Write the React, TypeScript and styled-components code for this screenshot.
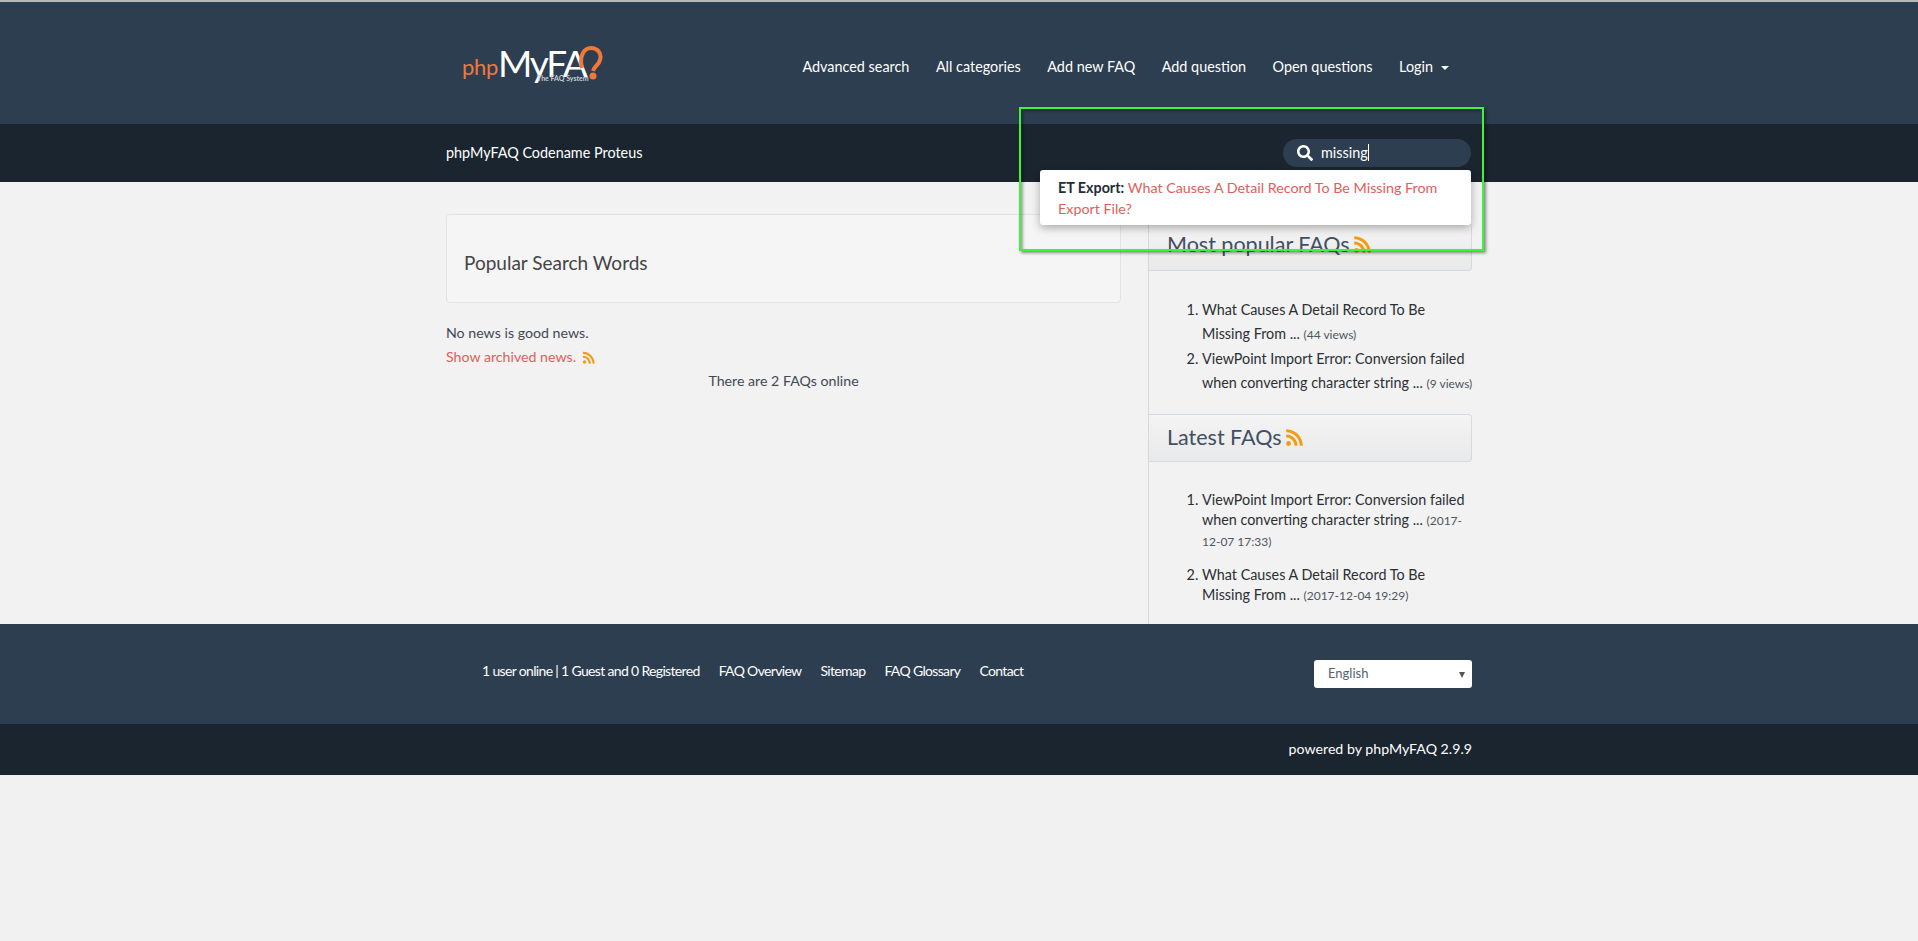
import { createGlobalStyle, styled } from 'styled-components'
import { FaRss, FaSearch } from 'react-icons/fa'

const GlobalStyle = createGlobalStyle`
  html, body {
    margin: 0;
    padding: 0;
    background: #f1f1f1;
    font-family: Lato, "Open Sans", sans-serif;
    font-size: 14px;
    line-height: 20px;
    color: #3e4651;
  }
  * { box-sizing: border-box; }
  a { text-decoration: none; }
`

const Page = styled.div`
  position: relative;
  height: 941px;
  overflow: hidden;
`

const Container = styled.div`
  width: 1026px;
  margin: 0 auto;
`

const Header = styled.header`
  height: 124px;
  border-top: 2px solid #b4b8bb;
  background: #2c3e50;
`

const HeaderInner = styled(Container)`
  display: flex;
  align-items: center;
  justify-content: space-between;
  height: 100%;
`

const Logo = styled.div`
  display: flex;
  align-items: center;
  position: relative;
  margin: 0 0 0 16px;
  height: 50px;
  color: #fff;
  font-size: 37px;
  letter-spacing: -2.2px;
  font-weight: 400;
`

const LogoPhp = styled.span`
  color: #f0793a;
  font-size: 22px;
  font-weight: 400;
  letter-spacing: -0.3px;
  margin-top: 8px;
`

const LogoTag = styled.span`
  position: absolute;
  left: 75px;
  top: 36px;
  font-size: 7px;
  line-height: 8px;
  font-weight: 700;
  letter-spacing: 0;
  color: #c9ced3;
  white-space: nowrap;
`

const LogoMark = styled.svg`
  margin-left: -8px;
`

const Nav = styled.nav`
  display: flex;
  align-items: center;
  gap: 26.5px;
  padding-right: 23px;
  margin-top: 7px;
`

const NavLink = styled.a`
  color: #fff;
  font-size: 14.4px;
  white-space: nowrap;
`

const Caret = styled.span`
  display: inline-block;
  margin-left: 8px;
  vertical-align: middle;
  border-top: 4px solid #fff;
  border-left: 4px solid transparent;
  border-right: 4px solid transparent;
`

const SubBar = styled.div`
  height: 58px;
  background: #1a252f;
  box-shadow: 0 1px 1px #c6c6c6;
`

const SubInner = styled(Container)`
  display: flex;
  align-items: center;
  justify-content: space-between;
  height: 100%;
`

const Tagline = styled.div`
  color: #fff;
  font-size: 14.4px;
  margin-top: -1px;
`

const Search = styled.div`
  display: flex;
  align-items: center;
  width: 188px;
  height: 28px;
  margin-right: 1px;
  margin-top: -1px;
  padding-left: 14px;
  border-radius: 14px;
  background: #2c3e50;
  color: #fff;
  font-size: 14.4px;
  svg { font-size: 16px; margin-right: 8px; }
`

const Cursor = styled.span`
  display: inline-block;
  width: 1px;
  height: 17px;
  background: #fff;
`

const MainWrap = styled.div`
  background: #f2f2f2;
`

const Main = styled(Container)`
  display: grid;
  grid-template-columns: 675px 324px;
  justify-content: space-between;
  height: 442px;
`

const LeftCol = styled.div`
  padding-top: 32px;
`

const Well = styled.div`
  display: flex;
  align-items: center;
  height: 89px;
  padding: 0 17px;
  margin-bottom: 18px;
  background: #f5f5f5;
  border: 1px solid #e3e3e3;
  border-radius: 4px;
`

const WellTitle = styled.h3`
  margin: 8px 0 0;
  font-size: 19px;
  font-weight: 400;
  color: #444;
`

const Line = styled.p`
  margin: 0;
  height: 24px;
  line-height: 24px;
  font-size: 14.2px;
  color: #3f4954;
`

const ArchiveLink = styled.a`
  color: #e35d5b;
`

const RssSmall = styled(FaRss)`
  margin-left: 6px;
  font-size: 13.5px;
  color: #f39c12;
  vertical-align: -2px;
`

const Online = styled(Line)`
  text-align: center;
`

const Sidebar = styled.aside`
  border-left: 1px solid #d5d9dd;
  padding-top: 41px;
`

const PanelHead = styled.h4<{ $gap: number; $lift: number }>`
  display: flex;
  align-items: center;
  height: 48px;
  margin: 0 0 ${p => p.$gap}px;
  padding: 0 0 ${p => p.$lift}px 18px;
  font-size: 21.5px;
  font-weight: 400;
  color: #3f4f63;
  background: linear-gradient(#f4f4f4, #e9e9e9);
  border: 1px solid #d5dae0;
  border-left: 0;
  border-radius: 0 4px 4px 0;
  svg { margin-left: 3px; font-size: 19px; color: #f39c12; }
`

const List = styled.ol<{ $lh: number; $gap: number }>`
  margin: 0 -1px ${p => p.$gap}px 0;
  padding: 0 0 0 53px;
  font-size: 14.35px;
  line-height: ${p => p.$lh}px;
  color: #2b2f33;
`

const Item = styled.li<{ $space?: number }>`
  margin-bottom: ${p => p.$space ?? 0}px;
`

const Small = styled.small`
  font-size: 12px;
  color: #4d5660;
`

const FooterTop = styled.footer`
  height: 100px;
  background: #2c3e50;
`

const FooterInner = styled(Container)`
  display: flex;
  justify-content: space-between;
  padding: 36px 0 0 36px;
`

const FooterLinks = styled.div`
  display: flex;
  gap: 19px;
  height: 22px;
  padding-top: 1px;
  color: #fff;
  font-size: 14px;
  letter-spacing: -0.66px;
`

const FooterLink = styled.a`
  color: #fff;
  white-space: nowrap;
`

const LangSelect = styled.div`
  position: relative;
  display: flex;
  align-items: center;
  width: 158px;
  height: 28px;
  padding: 0 0 2px 14px;
  background: #fff;
  border-radius: 3px;
  font-size: 13px;
  color: #556270;
  &::after {
    content: '';
    position: absolute;
    right: 7px;
    top: 12px;
    border-top: 6px solid #555;
    border-left: 3px solid transparent;
    border-right: 3px solid transparent;
  }
`

const FooterBottom = styled.div`
  height: 51px;
  background: #1a252f;
`

const Powered = styled(Container)`
  height: 100%;
  display: flex;
  align-items: center;
  justify-content: flex-end;
  padding-bottom: 2px;
  color: #fff;
  font-size: 14.2px;
`

const Suggest = styled.div`
  position: absolute;
  left: 1040px;
  top: 170px;
  width: 431px;
  height: 55px;
  padding: 7px 18px;
  background: #fff;
  border-radius: 3px;
  box-shadow: 0 3px 8px rgba(0, 0, 0, 0.3);
  line-height: 21px;
  font-size: 14.3px;
`

const SuggestCat = styled.b`
  color: #222d38;
`

const Highlight = styled.div`
  position: absolute;
  left: 1019px;
  top: 107px;
  width: 465px;
  height: 144px;
  border: 2px solid #3cf43c;
  box-shadow: 2px 2px 3px rgba(0, 0, 0, 0.45), inset 2px 2px 3px rgba(0, 0, 0, 0.35);
`

export default function App() {
  return (
    <Page>
      <GlobalStyle />
      <Header>
        <HeaderInner>
          <Logo>
            <LogoPhp>php</LogoPhp>MyFA
            <LogoMark width="26" height="36" viewBox="0 0 26 36">
              <path d="M4 23 C1 11 6 3 13 3 C20 3 24 9 22 15 C21 20 16 21 15 26" fill="none" stroke="#f0793a" strokeWidth="4" />
              <circle cx="15" cy="31" r="3.5" fill="#f0793a" />
            </LogoMark>
            <LogoTag>The FAQ System</LogoTag>
          </Logo>
          <Nav>
            <NavLink>Advanced search</NavLink>
            <NavLink>All categories</NavLink>
            <NavLink>Add new FAQ</NavLink>
            <NavLink>Add question</NavLink>
            <NavLink>Open questions</NavLink>
            <NavLink>Login<Caret /></NavLink>
          </Nav>
        </HeaderInner>
      </Header>
      <SubBar>
        <SubInner>
          <Tagline>phpMyFAQ Codename Proteus</Tagline>
          <Search>
            <FaSearch />
            missing<Cursor />
          </Search>
        </SubInner>
      </SubBar>
      <MainWrap>
        <Main>
          <LeftCol>
            <Well>
              <WellTitle>Popular Search Words</WellTitle>
            </Well>
            <Line>No news is good news.</Line>
            <Line>
              <ArchiveLink>Show archived news.</ArchiveLink>
              <RssSmall />
            </Line>
            <Online>There are 2 FAQs online</Online>
          </LeftCol>
          <Sidebar>
            <PanelHead $gap={27} $lift={6}>Most popular FAQs<FaRss /></PanelHead>
            <List $lh={24} $gap={18}>
              <Item>What Causes A Detail Record To Be Missing From ... <Small>(44 views)</Small></Item>
              <Item>ViewPoint Import Error: Conversion failed when converting character string ... <Small>(9 views)</Small></Item>
            </List>
            <PanelHead $gap={28} $lift={2}>Latest FAQs<FaRss /></PanelHead>
            <List $lh={20} $gap={0}>
              <Item $space={13}>ViewPoint Import Error: Conversion failed when converting character string ... <Small>(2017-12-07 17:33)</Small></Item>
              <Item>What Causes A Detail Record To Be Missing From ... <Small>(2017-12-04 19:29)</Small></Item>
            </List>
          </Sidebar>
        </Main>
      </MainWrap>
      <FooterTop>
        <FooterInner>
          <FooterLinks>
            <span>1 user online | 1 Guest and 0 Registered</span>
            <FooterLink>FAQ Overview</FooterLink>
            <FooterLink>Sitemap</FooterLink>
            <FooterLink>FAQ Glossary</FooterLink>
            <FooterLink>Contact</FooterLink>
          </FooterLinks>
          <LangSelect>English</LangSelect>
        </FooterInner>
      </FooterTop>
      <FooterBottom>
        <Powered>powered by phpMyFAQ 2.9.9</Powered>
      </FooterBottom>
      <Suggest>
        <SuggestCat>ET Export:</SuggestCat> <ArchiveLink>What Causes A Detail Record To Be Missing From Export File?</ArchiveLink>
      </Suggest>
      <Highlight />
    </Page>
  )
}
